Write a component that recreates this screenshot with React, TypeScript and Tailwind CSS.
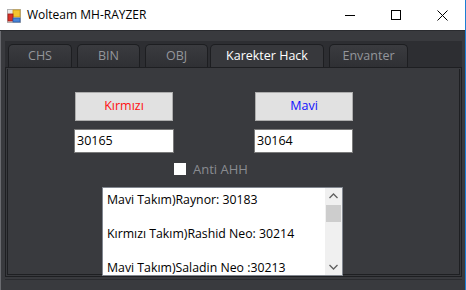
import React from "react";

const font = { fontFamily: '"Segoe UI", "Open Sans", "Noto Sans", sans-serif' };

function AppIcon() {
  return (
    <svg width="14" height="14" viewBox="0 0 14 14">
      <rect x="0.5" y="0.5" width="13" height="13" fill="#e8e8e8" stroke="#b0b0b0" />
      <rect x="6" y="1" width="7" height="7" fill="#f4c430" stroke="#d09a10" strokeWidth="0.8" />
      <rect x="1" y="5" width="5" height="7" fill="#d8322a" stroke="#a01a14" strokeWidth="0.8" />
      <rect x="6" y="9" width="7" height="4" fill="#4a86d8" stroke="#2a5cae" strokeWidth="0.8" />
    </svg>
  );
}

function Tab({ label, w, ml, active }: { label: string; w: string; ml: string; active?: boolean }) {
  return (
    <div
      className={`${w} ${ml} h-[23px] rounded-t-[5px] border border-b-0 border-[#1d1e21] flex items-center justify-center text-[12.5px] ${
        active ? "bg-[#37383c] text-white" : "bg-gradient-to-b from-[#3a3b3f] to-[#2f3034] text-[#94969b]"
      }`}
      style={font}
    >
      {label}
    </div>
  );
}

export default function App() {
  const items = ["Mavi Takım)Raynor: 30183", "", "Kırmızı Takım)Rashid Neo: 30214", "", "Mavi Takım)Saladin Neo :30213"];
  return (
    <div className="w-[466px] h-[290px] flex flex-col bg-[#393a3e] border-r border-[#1a7fd4] overflow-hidden" style={font}>
      {/* Title bar */}
      <div className="h-[31px] bg-white flex items-center shrink-0 border-b border-[#2a2b2f]">
        <div className="ml-[7px] mt-[1px]">
          <AppIcon />
        </div>
        <div className="ml-[6px] text-[12px] text-black" style={font}>
          Wolteam MH-RAYZER
        </div>
        <div className="ml-auto flex items-center h-full">
          <div className="w-[46px] h-full flex items-center justify-center">
            <div className="w-[10px] h-px bg-black" />
          </div>
          <div className="w-[46px] h-full flex items-center justify-center">
            <div className="w-[10px] h-[10px] border border-black" />
          </div>
          <div className="w-[46px] h-full flex items-center justify-center">
            <svg width="11" height="11" viewBox="0 0 11 11">
              <path d="M0.5 0.5 L10.5 10.5 M10.5 0.5 L0.5 10.5" stroke="#000" strokeWidth="1" />
            </svg>
          </div>
        </div>
      </div>

      {/* Body */}
      <div className="flex-1 flex flex-col pl-[4px] pr-[3px] pt-[10px] border-l border-[#6a6b70]">
        {/* Tab strip */}
        <div className="h-[26px] bg-[#2d2e32] flex items-end shrink-0">
          <Tab label="CHS" w="w-[64px]" ml="ml-[3px]" />
          <Tab label="BIN" w="w-[63px]" ml="ml-[5px]" />
          <Tab label="OBJ" w="w-[63px]" ml="ml-[5px]" />
          <Tab label="Karekter Hack" w="w-[114px]" ml="ml-[2px]" active />
          <Tab label="Envanter" w="w-[79px]" ml="ml-[5px]" />
        </div>
        {/* Panel */}
        <div className="h-[210px] border border-[#1e1f22] p-px shrink-0">
          <div className="h-full border border-[#1e1f22] border-t-0 bg-[#393a3e] flex flex-col">
            {/* Buttons */}
            <div className="flex mt-[23px]">
              <div className="ml-[67px] w-[98px] h-[29px] bg-[#e1e1e1] border border-[#adadad] flex items-center justify-center text-[12.5px] text-[#ff1010]">
                Kırmızı
              </div>
              <div className="ml-[82px] w-[98px] h-[29px] bg-[#e1e1e1] border border-[#adadad] flex items-center justify-center text-[12.5px] text-[#1010ff]">
                Mavi
              </div>
            </div>
            {/* Inputs */}
            <div className="flex mt-[8px]">
              <div className="ml-[66px] w-[100px] h-[24px] bg-white border border-[#7a7a7a] flex items-center pl-[2px] text-[12.5px] text-black">
                30165
              </div>
              <div className="ml-[80px] w-[99px] h-[24px] bg-white border border-[#7a7a7a] flex items-center pl-[2px] text-[12.5px] text-black">
                30164
              </div>
            </div>
            {/* Checkbox */}
            <div className="flex items-center mt-[10px] ml-[166px] h-[12px]">
              <div className="w-[12px] h-[12px] bg-white" />
              <span className="ml-[7px] text-[13px] text-[#8a8c91] leading-none">Anti AHH</span>
            </div>
            {/* Listbox */}
            <div className="relative z-10 mt-[12px] ml-[94px] w-[241px] h-[89px] bg-white border border-[#828790] flex">
              <div className="flex-1 pt-[3px] pl-[4px]">
                {items.map((t, i) => (
                  <div key={i} className="h-[17px] leading-[17px] text-[12.3px] text-black whitespace-nowrap">
                    {t}
                  </div>
                ))}
              </div>
              <div className="w-[17px] bg-[#f0f0f0] flex flex-col items-center">
                <svg width="17" height="17" viewBox="0 0 17 17">
                  <path d="M4.5 10 L8.5 6 L12.5 10" fill="none" stroke="#606060" strokeWidth="1.3" />
                </svg>
                <div className="w-[15px] h-[17px] bg-[#cdcdcd]" />
                <div className="flex-1" />
                <svg width="17" height="17" viewBox="0 0 17 17">
                  <path d="M4.5 7 L8.5 11 L12.5 7" fill="none" stroke="#606060" strokeWidth="1.3" />
                </svg>
              </div>
            </div>
          </div>
        </div>
        <div className="h-px bg-[#2a2b2f] mt-[2px]" />
      </div>
    </div>
  );
}
